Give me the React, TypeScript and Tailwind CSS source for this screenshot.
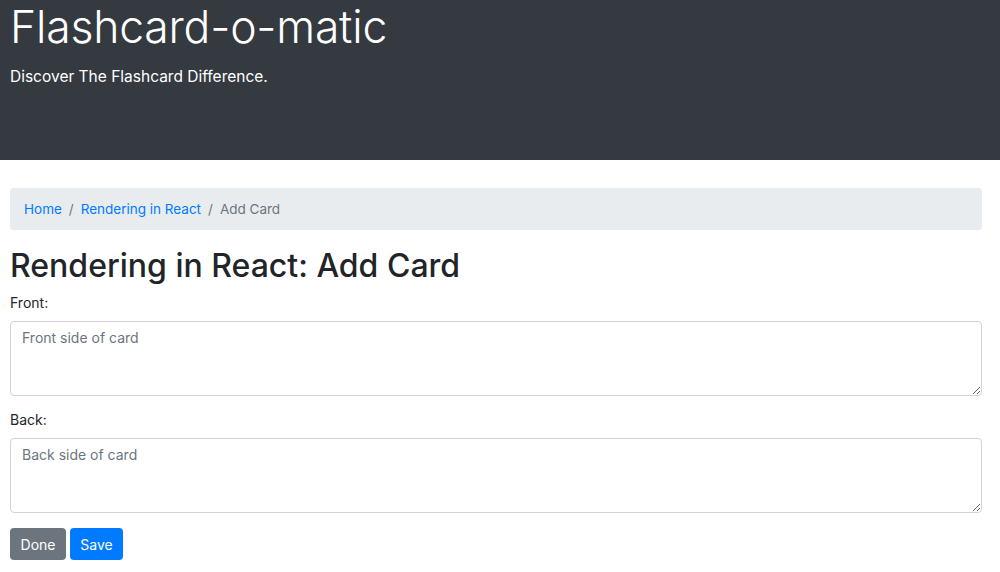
import { useState } from "react";

const sans = "font-['Inter','Liberation_Sans',Arial,sans-serif]";

function Header() {
  return (
    <header className="h-[160px] bg-[#343a40] pl-[10px] text-white">
      <h1 className="pt-[1px] text-[44.5px] font-light leading-[52px] tracking-[-0.2px]">
        Flashcard-o-matic
      </h1>
      <p className="mt-[14px] text-[15.5px] leading-[20px]">
        Discover The Flashcard Difference.
      </p>
    </header>
  );
}

function Breadcrumb() {
  return (
    <nav className="mt-[28px] flex h-[42px] items-center rounded-[4px] bg-[#e9ecef] px-[14px] text-[13.5px]">
      <a href="#" className="text-[#007bff]">
        Home
      </a>
      <span className="px-[7px] text-[#6c757d]">/</span>
      <a href="#" className="text-[#007bff]">
        Rendering in React
      </a>
      <span className="px-[7px] text-[#6c757d]">/</span>
      <span className="text-[#6c757d]">Add Card</span>
    </nav>
  );
}

function Field({
  label,
  placeholder,
  value,
  onChange,
}: {
  label: string;
  placeholder: string;
  value: string;
  onChange: (v: string) => void;
}) {
  return (
    <div>
      <label className="block text-[14px] leading-[20px] text-[#212529]">{label}</label>
      <textarea
        value={value}
        onChange={(e) => onChange(e.target.value)}
        placeholder={placeholder}
        className="mt-[8px] block h-[75px] w-full rounded-[4px] border border-[#ced4da] px-[11px] py-[5px] text-[14px] leading-[21px] text-[#495057] placeholder:text-[#6c757d] outline-none"
      />
    </div>
  );
}

export default function App() {
  const [front, setFront] = useState("");
  const [back, setBack] = useState("");

  return (
    <div className={`${sans} min-h-[572px] bg-white`}>
      <Header />
      <main className="pl-[10px] pr-[18px]">
        <Breadcrumb />
        <h2 className="mt-[14px] text-[32px] font-medium leading-[44px] text-[#212529]">
          Rendering in React: Add Card
        </h2>
        <div className="mt-[5px] flex flex-col gap-[14px]">
          <Field label="Front:" placeholder="Front side of card" value={front} onChange={setFront} />
          <Field label="Back:" placeholder="Back side of card" value={back} onChange={setBack} />
        </div>
        <div className="mt-[15px] flex gap-[4px]">
          <button className="h-[32px] w-[56px] rounded-[4px] bg-[#6c757d] text-[14px] text-white">
            Done
          </button>
          <button className="h-[32px] w-[53px] rounded-[4px] bg-[#007bff] text-[14px] text-white">
            Save
          </button>
        </div>
      </main>
    </div>
  );
}
